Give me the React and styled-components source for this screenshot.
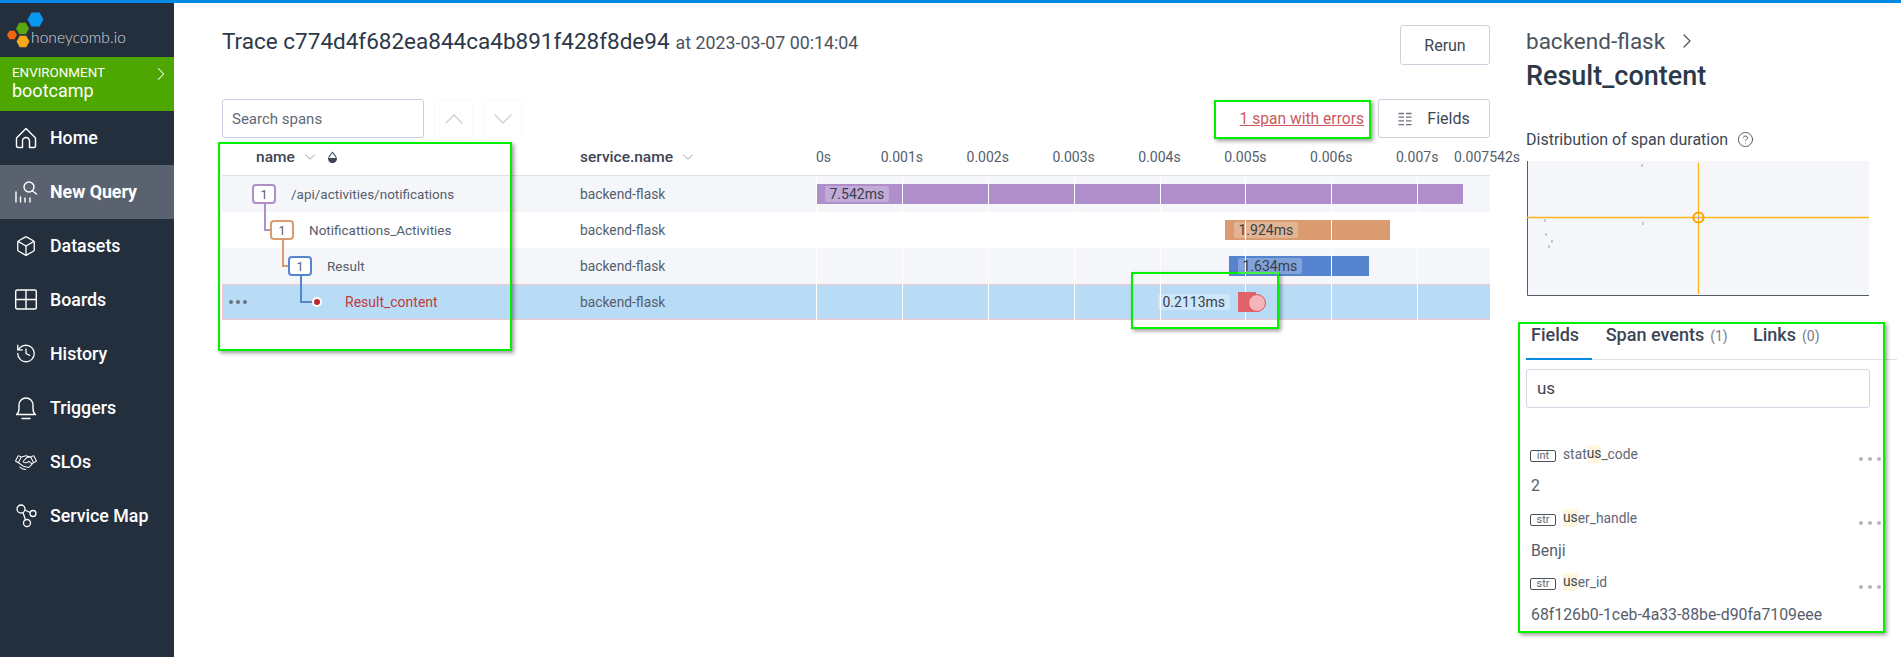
import React from 'react'
import styled, { createGlobalStyle } from 'styled-components'
import { Box, History, ChevronRight, ChevronUp, ChevronDown, CircleHelp } from 'lucide-react'
import { PiHandshakeLight } from 'react-icons/pi'

const Global = createGlobalStyle`
  html, body { margin: 0; padding: 0; background: #fff; }
  body { font-family: Roboto, "Liberation Sans", sans-serif; color: #4b5360; overflow: hidden; }
  * { box-sizing: border-box; }
`

const Page = styled.div`
  position: relative;
  width: 1901px;
  height: 657px;
  display: flex;
  flex-direction: column;
  overflow: hidden;
`
const TopBar = styled.div`
  height: 3px;
  flex: none;
  background: #0189e4;
`
const Body = styled.div`
  flex: 1;
  display: flex;
  min-height: 0;
`

/* sidebar */
const Sidebar = styled.nav`
  width: 174px;
  flex: none;
  background: #242f3e;
  color: #fff;
`
const LogoRow = styled.div`
  height: 54px;
  display: flex;
  align-items: center;
`
const LogoText = styled.span`
  font-family: Lato, Roboto, sans-serif;
  font-weight: 300;
  font-size: 15.5px;
  color: #d5d8dc;
  margin: 13px 0 0 -14px;
  letter-spacing: 0.1px;
`
const EnvBox = styled.div`
  height: 54px;
  background: #4ea600;
  padding: 9px 10px 0 12px;
  position: relative;
  line-height: 1;
`
const EnvLabel = styled.div`
  font-size: 13.4px;
`
const EnvName = styled.div`
  font-size: 18px;
  margin-top: 3px;
`
const EnvArrow = styled(ChevronRight)`
  position: absolute;
  right: 2px;
  top: 6px;
`
const NavItem = styled.div`
  height: 54px;
  display: flex;
  align-items: center;
  gap: 13px;
  padding: 0 0 1px 15px;
  font-size: 17.8px;
  font-weight: ${p => (p.$active ? 700 : 500)};
  background: ${p => (p.$active ? '#5a6270' : 'transparent')};
`
const NavIcon = styled.span`
  width: 22px;
  height: 22px;
  flex: none;
  display: flex;
  align-items: center;
  justify-content: center;
`

/* trace column */
const Main = styled.main`
  width: 1352px;
  flex: none;
  padding: 0 36px 0 48px;
`
const TraceHeader = styled.div`
  height: 96px;
  display: flex;
  justify-content: space-between;
  align-items: flex-start;
  padding-top: 22px;
`
const Title = styled.h1`
  margin: 3px 0 0;
  font-size: 22.5px;
  font-weight: 400;
  color: #2d3848;
  line-height: 26px;
`
const TitleAt = styled.span`
  font-size: 17.8px;
  color: #4b5360;
  margin-left: 6px;
`
const Button = styled.button`
  height: ${p => p.$height}px;
  width: ${p => p.$width}px;
  background: #fff;
  border: 1px solid #ccd3df;
  border-radius: 3px;
  font: 400 16px Roboto, sans-serif;
  color: #3d4655;
  display: flex;
  align-items: center;
  justify-content: center;
  gap: 15px;
  padding: 0;
`
const Toolbar = styled.div`
  height: 39px;
  display: flex;
  align-items: center;
`
const SearchBox = styled.div`
  width: 202px;
  height: 39px;
  border: 1px solid #c6d0de;
  border-radius: 3px;
  display: flex;
  align-items: center;
  padding-left: 9px;
  font-size: 15px;
  color: #5f6774;
`
const StepButton = styled.div`
  width: 39px;
  height: 39px;
  margin-left: ${p => p.$gap}px;
  border: 1px solid #f8f9fb;
  border-radius: 3px;
  display: flex;
  align-items: center;
  justify-content: center;
  color: #c9ccd1;
`
const ErrorLink = styled.a`
  margin-left: auto;
  margin-right: 14px;
  font-size: 15.6px;
  color: #cd5a60;
  text-decoration: underline;
`

const Row = styled.div`
  display: grid;
  grid-template-columns: 358px 236px 674px;
  height: 36px;
  background: ${p => (p.$selected ? '#b8dcf6' : p.$alt ? '#f5f6fa' : '#fff')};
  ${p => p.$selected && 'box-shadow: inset 0 0 0 1px #f6c8cc;'}
  font-size: 13.8px;
  color: #565e6b;
`
const HeaderRow = styled(Row)`
  height: 38px;
  border-bottom: 1px solid #dfe2ec;
  color: #3d4655;
`
const HeaderCell = styled.div`
  display: flex;
  align-items: center;
  font-weight: 500;
  font-size: 15.5px;
  padding-left: ${p => p.$pad || 0}px;
`
const SortArrow = styled(ChevronDown)`
  margin-left: 6px;
  color: #7c8490;
`
const Axis = styled.div`
  display: flex;
  align-items: center;
  margin-left: -43px;
  white-space: nowrap;
`
const Tick = styled.span`
  flex: 0 0 85.9px;
  display: flex;
  justify-content: ${p => (p.$first ? 'flex-start' : 'center')};
  padding-left: ${p => (p.$first ? 43 : 0)}px;
  margin-left: ${p => p.$shift || 0}px;
  font-size: 14px;
  color: #565e6b;
`
const TreeCell = styled.div`
  position: relative;
  display: flex;
  align-items: center;
  padding-left: ${p => 30 + p.$depth * 18}px;
  font-size: ${p => (p.$error ? 14 : 13.500)}px;
  color: ${p => (p.$error ? '#c0393f' : 'inherit')};
`
const RowDots = styled.span`
  position: absolute;
  left: 7px;
  top: 50%;
  margin-top: -2px;
  display: flex;
  gap: 3px;
`
const Dot = styled.i`
  width: 4px;
  height: 4px;
  border-radius: 50%;
  background: ${p => p.$color};
`
const NodeSlot = styled.span`
  position: relative;
  width: 39px;
  height: 20px;
  flex: none;
  display: flex;
  align-items: center;
`
const Badge = styled.span`
  position: relative;
  width: 24px;
  height: 20px;
  border: 2px solid ${p => p.$color};
  border-radius: 4px;
  background: #fff;
  font-size: 12.5px;
  display: flex;
  align-items: center;
  justify-content: center;
  z-index: 1;
`
const Elbow = styled.span`
  position: absolute;
  left: -6.5px;
  bottom: 9px;
  width: ${p => p.$reach}px;
  height: 28px;
  border-left: 2px solid ${p => p.$color};
  border-bottom: 2px solid ${p => p.$color};
`
const LeafDot = styled.span`
  position: relative;
  margin-left: 8px;
  width: 6px;
  height: 6px;
  border-radius: 50%;
  background: #c0272d;
  box-shadow: 0 0 0 2px #fff;
  z-index: 1;
`
const ServiceCell = styled.div`
  display: flex;
  align-items: center;
`
const Timeline = styled.div`
  position: relative;
  display: flex;
  align-items: center;
  padding-left: ${p => p.$offset}px;
  &::after {
    content: '';
    position: absolute;
    inset: 0;
    pointer-events: none;
    background: repeating-linear-gradient(90deg, #fff 0 1px, transparent 1px 85.9px);
    background-size: 686px 100%;
  }
`
const Bar = styled.div`
  width: ${p => p.$width}px;
  height: 20px;
  background: ${p => p.$color};
  display: flex;
  align-items: center;
  padding-left: ${p => p.$pad}px;
`
const BarLabel = styled.span`
  position: relative;
  z-index: 1;
  height: 16px;
  padding: 0 4.5px;
  border-radius: 2px;
  background: rgba(255, 255, 255, 0.25);
  color: #373f4c;
  font-size: 14px;
  line-height: 16px;
  white-space: nowrap;
`
const FloatLabel = styled(BarLabel)`
  background: rgba(255, 255, 255, 0.3);
  margin-right: 8px;
`
const ErrorBar = styled.div`
  position: relative;
  width: 18px;
  height: 20px;
  background: #e2626a;
  z-index: 1;
  &::after {
    content: '';
    position: absolute;
    left: 10px;
    top: 2px;
    width: 16px;
    height: 16px;
    border-radius: 50%;
    background: #f3b5b9;
    border: 1px solid #e2515a;
  }
`

/* span detail */
const Detail = styled.aside`
  flex: 1;
  min-width: 0;
  padding-top: 25px;
`
const Service = styled.div`
  display: flex;
  align-items: center;
  gap: 10px;
  height: 26px;
  font-size: 22.5px;
  color: #4b5360;
`
const SpanName = styled.h2`
  margin: 6px 0 0;
  font-size: 27px;
  line-height: 32px;
  font-weight: 500;
  color: #2d3848;
`
const DistTitle = styled.div`
  display: flex;
  align-items: center;
  gap: 9px;
  height: 20px;
  margin-top: 37px;
  font-size: 16px;
  color: #3d4655;
`
const Chart = styled.svg`
  display: block;
  margin: 12px 0 0 1px;
`
const Tabs = styled.div`
  display: flex;
  height: 38px;
  margin-top: 26px;
  border-bottom: 1px solid #dfe2ec;
  margin-right: 4px;
`
const Tab = styled.div`
  width: ${p => p.$width}px;
  height: 38px;
  flex: none;
  padding: 1px 0 0 ${p => p.$pad}px;
  font-size: 18px;
  line-height: 24px;
  font-weight: 500;
  color: #3d4655;
  border-bottom: 2px solid ${p => (p.$active ? '#0189e4' : 'transparent')};
`
const TabCount = styled.span`
  font-size: 14px;
  font-weight: 400;
  color: #757c88;
  margin-left: 6px;
`
const FilterBox = styled.div`
  width: 344px;
  height: 39px;
  margin-top: 9px;
  border: 1px solid #d0d7e2;
  border-radius: 3px;
  display: flex;
  align-items: center;
  padding: 0 0 2px 10px;
  font-size: 17px;
  color: #3d4655;
`
const FieldList = styled.div`
  width: 355px;
  margin-top: 36px;
`
const Field = styled.div`
  height: 64px;
`
const FieldHead = styled.div`
  position: relative;
  display: flex;
  align-items: center;
  height: 20px;
  padding-left: 4px;
  font-size: 13.8px;
  color: #5f6774;
`
const TypeTag = styled.span`
  width: 26px;
  height: 12px;
  margin: 3px 7px 0 0;
  border: 1px solid #4b5360;
  border-radius: 2px;
  font-size: 11px;
  line-height: 10px;
  text-align: center;
  color: #5f6774;
`
const Match = styled.mark`
  background: #fff7df;
  color: #3d4655;
  padding-bottom: 2px;
`
const FieldDots = styled.span`
  position: absolute;
  right: 0;
  top: 13px;
  display: flex;
  gap: 5px;
`
const FieldValue = styled.div`
  height: 24px;
  margin-top: ${p => (p.$first ? 10 : 11)}px;
  padding-left: 5px;
  font-size: 15.8px;
  line-height: 24px;
  color: #565e6b;
  white-space: nowrap;
`

/* green annotation boxes drawn over the screenshot */
const Callout = styled.div`
  position: absolute;
  left: ${p => p.$x}px;
  top: ${p => p.$y}px;
  width: ${p => p.$w}px;
  height: ${p => p.$h}px;
  border: 2px solid #00f000;
  box-shadow: 2px 2px 4px rgba(0, 0, 0, 0.4);
  pointer-events: none;
`

const HomeIcon = () => (
  <svg width="22" height="22" viewBox="0 0 22 22" fill="none" stroke="#fff" strokeWidth="1.4" strokeLinejoin="round">
    <path d="M1.5 11 11 1.5 20.5 11v8a1.5 1.5 0 0 1-1.5 1.5h-4.5V14a3.5 3.5 0 0 0-7 0v6.5H3A1.5 1.5 0 0 1 1.5 19z" />
  </svg>
)
const QueryIcon = () => (
  <svg width="22" height="22" viewBox="0 0 22 22" fill="none" stroke="#fff" strokeWidth="1.4" strokeLinecap="round">
    <circle cx="14" cy="6" r="5" />
    <path d="m17.500 10 4 3M1 21V11M5.500 21v-5M10 21v-4M15 21v-4" />
  </svg>
)
const BoardsIcon = () => (
  <svg width="22" height="22" viewBox="0 0 22 22" fill="none" stroke="#fff" strokeWidth="1.4">
    <rect x="0.7" y="1" width="20.600" height="19" rx="1.500" />
    <path d="M0.700 10.500h20.600M11 1v19" />
  </svg>
)
const BellIcon = () => (
  <svg width="22" height="24" viewBox="0 0 22 24" fill="none" stroke="#fff" strokeWidth="1.4" strokeLinecap="round" strokeLinejoin="round">
    <path d="M1.500 18.500c1.800-1.300 2.500-3 2.500-6V9a7 7 0 0 1 14 0v3.500c0 3 .7 4.700 2.500 6z" />
    <path d="M7 22.500h8" />
  </svg>
)
const MapIcon = () => (
  <svg width="22" height="24" viewBox="0 0 22 24" fill="none" stroke="#fff" strokeWidth="1.300">
    <circle cx="6" cy="5" r="4" />
    <circle cx="18" cy="9.500" r="3" />
    <circle cx="12" cy="19" r="3.500" />
    <path d="m10 6 5 2.500M8 8.500l2.500 7.500" />
  </svg>
)

const hexPoints = (cx, cy, r) => {
  const h = r * 0.87
  return `${cx - r},${cy} ${cx - r / 2},${cy - h} ${cx + r / 2},${cy - h} ${cx + r},${cy} ${cx + r / 2},${cy + h} ${cx - r / 2},${cy + h}`
}
const Logo = () => (
  <svg width="45" height="54" viewBox="0 0 45 54">
    <polygon points={hexPoints(35.5, 16.5, 8)} fill="#0a97ef" />
    <polygon points={hexPoints(22.5, 25.5, 6.500)} fill="#59a80f" />
    <polygon points={hexPoints(12, 32, 5)} fill="#f0650e" />
    <polygon points={hexPoints(23, 38.5, 6.500)} fill="#f7a81b" />
  </svg>
)
const DragDrop = () => (
  <svg width="11" height="12" viewBox="0 0 14 14" style={{ marginLeft: 8 }}>
    <path d="M7 1C5 3.800 2 6 2 9a5 5 0 0 0 10 0C12 6 9 3.800 7 1z" fill="#fff" stroke="#3d4655" strokeWidth="1.300" />
    <path d="M2 8.300h10V9A5 5 0 0 1 2 9z" fill="#3d4655" />
  </svg>
)
const FieldsIcon = () => (
  <svg width="14" height="14" viewBox="0 0 14 14" stroke="#6d7480" strokeWidth="1.300">
    <path d="M0.500 1.500h5.500M8 1.500h5.500M0.500 5.200h5.500M8 5.200h5.500M0.500 8.900h5.500M8 8.900h5.500M0.500 12.600h5.500M8 12.600h5.500" />
  </svg>
)

const navItems = [
  { label: 'Home', icon: <HomeIcon /> },
  { label: 'New Query', icon: <QueryIcon />, active: true },
  { label: 'Datasets', icon: <Box size={24} strokeWidth={1.4} /> },
  { label: 'Boards', icon: <BoardsIcon /> },
  { label: 'History', icon: <History size={23} strokeWidth={1.4} /> },
  { label: 'Triggers', icon: <BellIcon /> },
  { label: 'SLOs', icon: <PiHandshakeLight size={32} /> },
  { label: 'Service Map', icon: <MapIcon /> },
]

const ticks = ['0s', '0.001s', '0.002s', '0.003s', '0.004s', '0.005s', '0.006s', '0.007s']

const spans = [
  { name: '/api/activities/notifications', depth: 0, color: '#af8fca', start: 1, width: 646, pad: 8, time: '7.542ms' },
  { name: 'Notificattions_Activities', depth: 1, color: '#d99b6f', parent: '#af8fca', reach: 9, start: 409, width: 165, pad: 9, time: '1.924ms' },
  { name: 'Result', depth: 2, color: '#5784ce', parent: '#d99b6f', reach: 9, start: 413, width: 140, pad: 9, time: '1.634ms' },
]

const fields = [
  { type: 'int', pre: 'stat', post: '_code', match: 'us', value: '2' },
  { type: 'str', pre: '', post: 'er_handle', match: 'us', value: 'Benji' },
  { type: 'str', pre: '', post: 'er_id', match: 'us', value: '68f126b0-1ceb-4a33-88be-d90fa7109eee' },
]

const Scatter = () => (
  <Chart width="342" height="135" viewBox="0 0 342 135">
    <rect width="342" height="135" fill="#f5f6fa" />
    <path d="M.5 0v134.500H342" fill="none" stroke="#555c68" />
    <path d="M0 56.500h342M171.500 2v131" stroke="#ffb51c" strokeWidth="1.300" />
    <g stroke="#a9a7c4" strokeWidth="1.200">
      <path d="M115 3v3M18 58v3M19 72v3M25 79v3M22 84v3M116 61v3M171.500 55v3" />
    </g>
    <circle cx="171.500" cy="56.500" r="5" fill="none" stroke="#f5a800" strokeWidth="2.200" />
  </Chart>
)

export default function App() {
  return (
    <Page>
      <Global />
      <TopBar />
      <Body>
        <Sidebar>
          <LogoRow>
            <Logo />
            <LogoText>honeycomb.io</LogoText>
          </LogoRow>
          <EnvBox>
            <EnvLabel>ENVIRONMENT</EnvLabel>
            <EnvName>bootcamp</EnvName>
            <EnvArrow size={22} strokeWidth={1.1} />
          </EnvBox>
          {navItems.map(item => (
            <NavItem key={item.label} $active={item.active}>
              <NavIcon>{item.icon}</NavIcon>
              {item.label}
            </NavItem>
          ))}
        </Sidebar>

        <Main>
          <TraceHeader>
            <Title>
              Trace c774d4f682ea844ca4b891f428f8de94<TitleAt>at 2023-03-07 00:14:04</TitleAt>
            </Title>
            <Button $width={90} $height={40}>Rerun</Button>
          </TraceHeader>
          <Toolbar>
            <SearchBox>Search spans</SearchBox>
            <StepButton $gap={10}><ChevronUp size={32} strokeWidth={0.9} /></StepButton>
            <StepButton $gap={10}><ChevronDown size={32} strokeWidth={0.9} /></StepButton>
            <ErrorLink>1 span with errors</ErrorLink>
            <Button $width={112} $height={39}><FieldsIcon />Fields</Button>
          </Toolbar>

          <HeaderRow>
            <HeaderCell $pad={34}>name<SortArrow size={18} strokeWidth={1} /><DragDrop /></HeaderCell>
            <HeaderCell>service.name<SortArrow size={18} strokeWidth={1} /></HeaderCell>
            <Axis>
              {ticks.map((t, i) => <Tick key={t} $first={i === 0}>{t}</Tick>)}
              <Tick $shift={-16}>0.007542s</Tick>
            </Axis>
          </HeaderRow>

          {spans.map((s, i) => (
            <Row key={s.name} $alt={i % 2 === 0}>
              <TreeCell $depth={s.depth}>
                <NodeSlot>
                  {s.parent && <Elbow $color={s.parent} $reach={s.reach} />}
                  <Badge $color={s.color}>1</Badge>
                </NodeSlot>
                {s.name}
              </TreeCell>
              <ServiceCell>backend-flask</ServiceCell>
              <Timeline $offset={s.start}>
                <Bar $color={s.color} $width={s.width} $pad={s.pad}><BarLabel>{s.time}</BarLabel></Bar>
              </Timeline>
            </Row>
          ))}
          <Row $selected>
            <TreeCell $depth={3} $error>
              <RowDots><Dot $color="#6b7280" /><Dot $color="#6b7280" /><Dot $color="#6b7280" /></RowDots>
              <NodeSlot>
                <Elbow $color="#5784ce" $reach={14} />
                <LeafDot />
              </NodeSlot>
              Result_content
            </TreeCell>
            <ServiceCell>backend-flask</ServiceCell>
            <Timeline $offset={342}>
              <FloatLabel>0.2113ms</FloatLabel>
              <ErrorBar />
            </Timeline>
          </Row>
        </Main>

        <Detail>
          <Service>backend-flask<ChevronRight size={24} strokeWidth={1.2} /></Service>
          <SpanName>Result_content</SpanName>
          <DistTitle>Distribution of span duration<CircleHelp size={17} strokeWidth={1.2} /></DistTitle>
          <Scatter />
          <Tabs>
            <Tab $active $width={66} $pad={5}>Fields</Tab>
            <Tab $width={161} $pad={13.700}>Span events<TabCount>(1)</TabCount></Tab>
            <Tab $width={100} $pad={0}>Links<TabCount>(0)</TabCount></Tab>
          </Tabs>
          <FilterBox>us</FilterBox>
          <FieldList>
            {fields.map((f, i) => (
              <Field key={f.post}>
                <FieldHead>
                  <TypeTag>{f.type}</TypeTag>
                  {f.pre}<Match>{f.match}</Match>{f.post}
                  <FieldDots><Dot $color="#b3b7bf" /><Dot $color="#b3b7bf" /><Dot $color="#b3b7bf" /></FieldDots>
                </FieldHead>
                <FieldValue $first={i === 0}>{f.value}</FieldValue>
              </Field>
            ))}
          </FieldList>
        </Detail>
      </Body>

      <Callout $x={218} $y={142} $w={294} $h={209} />
      <Callout $x={1214} $y={100} $w={157} $h={39} />
      <Callout $x={1131} $y={272} $w={148} $h={57} />
      <Callout $x={1518} $y={322} $w={367} $h={311} />
    </Page>
  )
}
